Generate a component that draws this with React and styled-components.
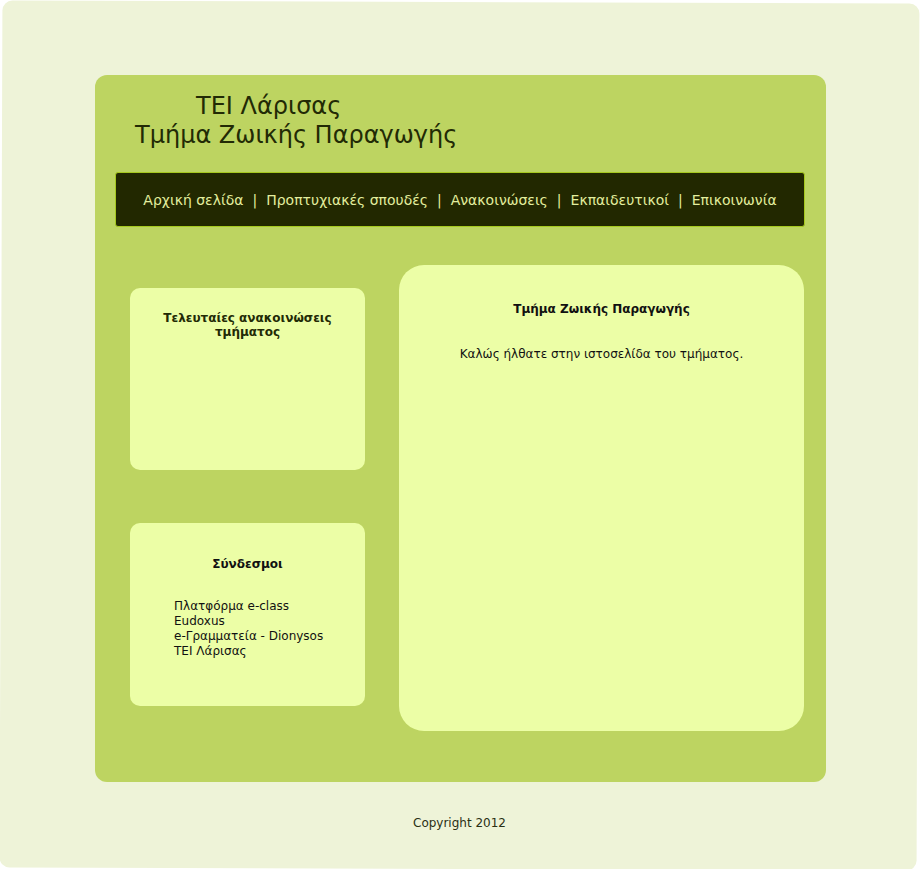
import React from 'react';
import styled, { createGlobalStyle } from 'styled-components';

const GlobalStyle = createGlobalStyle`
  html, body {
    margin: 0;
    padding: 0;
    background: #ffffff;
  }
  body {
    font-family: "DejaVu Sans", Verdana, sans-serif;
  }
`;

const Page = styled.div`
  position: relative;
  z-index: 0;
  width: 917px;
  height: 867px;
  margin: 2px 0 0 1px;
  padding-top: 73px;
  box-sizing: border-box;

  &::before {
    content: "";
    position: absolute;
    inset: 0;
    z-index: -1;
    background: #eef3d8;
    border-radius: 10px;
    transform: rotate(0.19deg);
  }
`;

const Main = styled.div`
  width: 731px;
  height: 707px;
  margin-left: 94px;
  background: #bdd461;
  border-radius: 12px;
  padding-top: 17px;
  box-sizing: border-box;
`;

const Header = styled.h1`
  margin: 0 0 22px 40px;
  font-size: 24px;
  font-weight: normal;
  line-height: 29px;
  color: #222a05;
`;

const HeaderLine = styled.span`
  display: block;
  padding-left: ${(p) => p.$indent || 0}px;
`;

const Nav = styled.nav`
  display: flex;
  align-items: center;
  justify-content: center;
  width: 690px;
  height: 55px;
  margin-left: 20px;
  box-sizing: border-box;
  background: #222800;
  border: 1px solid #a6c81f;
  border-radius: 3px;
  font-size: 14px;
  color: #e3ee9e;
`;

const NavLink = styled.a`
  color: #e3ee9e;
  text-decoration: none;
`;

const Sep = styled.span`
  margin: 0 9px;
`;

const Columns = styled.div`
  display: flex;
  gap: 34px;
  margin: 38px 0 0 35px;
`;

const Side = styled.div`
  display: flex;
  flex-direction: column;
  gap: 53px;
  width: 235px;
  padding-top: 23px;
`;

const Box = styled.div`
  height: ${(p) => p.$h}px;
  background: #ecfea6;
  border-radius: 10px;
  padding-top: ${(p) => p.$pt}px;
  box-sizing: border-box;
  color: #111;
  font-size: 12px;
`;

const BoxTitle = styled.h3`
  margin: 0;
  padding: 0 25px;
  text-align: center;
  font-size: 12px;
  font-weight: bold;
  line-height: 14px;
  color: ${(p) => p.$c || '#222a05'};
`;

const LinkList = styled.ul`
  list-style: none;
  margin: 28px 0 0 44px;
  padding: 0;
  line-height: 15px;
`;

const LinkItem = styled.li`
  color: #111;
`;

const Content = styled.div`
  width: 405px;
  height: 466px;
  background: #ecfea6;
  border-radius: 25px;
  padding-top: 37px;
  box-sizing: border-box;
  text-align: center;
  font-size: 12px;
  color: #111;
`;

const Welcome = styled.p`
  margin: 31px 0 0;
  line-height: 14px;
`;

const Footer = styled.div`
  margin-top: 34px;
  text-align: center;
  font-size: 12px;
  color: #2a2f15;
`;

const links = ['Αρχική σελίδα', 'Προπτυχιακές σπουδές', 'Ανακοινώσεις', 'Εκπαιδευτικοί', 'Επικοινωνία'];

export default function App() {
  return (
    <>
      <GlobalStyle />
      <Page>
        <Main>
          <Header>
            <HeaderLine $indent={61}>ΤΕΙ Λάρισας</HeaderLine>
            <HeaderLine>Τμήμα Ζωικής Παραγωγής</HeaderLine>
          </Header>
          <Nav>
            {links.map((l, i) => (
              <React.Fragment key={l}>
                {i > 0 && <Sep>|</Sep>}
                <NavLink href="#">{l}</NavLink>
              </React.Fragment>
            ))}
          </Nav>
          <Columns>
            <Side>
              <Box $h={182} $pt={23}>
                <BoxTitle>Τελευταίες ανακοινώσεις τμήματος</BoxTitle>
              </Box>
              <Box $h={183} $pt={34}>
                <BoxTitle $c="#111">Σύνδεσμοι</BoxTitle>
                <LinkList>
                  <LinkItem>Πλατφόρμα e-class</LinkItem>
                  <LinkItem>Eudoxus</LinkItem>
                  <LinkItem>e-Γραμματεία - Dionysos</LinkItem>
                  <LinkItem>ΤΕΙ Λάρισας</LinkItem>
                </LinkList>
              </Box>
            </Side>
            <Content>
              <BoxTitle $c="#111">Τμήμα Ζωικής Παραγωγής</BoxTitle>
              <Welcome>Καλώς ήλθατε στην ιστοσελίδα του τμήματος.</Welcome>
            </Content>
          </Columns>
        </Main>
        <Footer>Copyright 2012</Footer>
      </Page>
    </>
  );
}
